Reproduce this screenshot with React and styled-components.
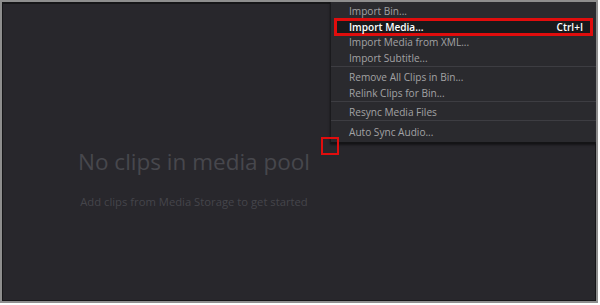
import React from 'react'
import styled, { createGlobalStyle } from 'styled-components'

const GlobalStyle = createGlobalStyle`
  html, body {
    margin: 0;
    padding: 0;
    background: #ffffff;
  }
  body {
    font-family: "Open Sans", "Noto Sans", sans-serif;
  }
`

const Screen = styled.div`
  position: relative;
  box-sizing: border-box;
  width: 598px;
  height: 303px;
  border: 2px solid #8e8e8e;
  background: #28272c;
  box-shadow: inset 0 0 0 1px #161618, inset 0 1px 0 1px #161618;
  overflow: hidden;
`

const EmptyState = styled.div`
  width: 384px;
  display: flex;
  flex-direction: column;
  align-items: center;
  padding-top: 146px;
`

const Title = styled.div`
  font-size: 22.5px;
  line-height: 27px;
  color: #47474d;
  white-space: nowrap;
`

const Hint = styled.div`
  margin-top: 20px;
  font-size: 11.25px;
  line-height: 14px;
  color: #45454b;
  white-space: nowrap;
`

const Menu = styled.div`
  position: absolute;
  top: 0;
  right: 0;
  box-sizing: border-box;
  width: 266px;
  padding: 1.5px 0 2px;
  background: #2a2a2e;
  border-left: 1px solid #1a1a1d;
  border-bottom: 2px solid #141416;
  box-shadow: 0 1px 2px rgba(0, 0, 0, 0.5);
`

const Item = styled.div`
  display: flex;
  align-items: center;
  justify-content: space-between;
  box-sizing: border-box;
  height: 15.5px;
  padding: 0 8px 0 18px;
  font-size: 10.1px;
  color: #a2a2a4;
  white-space: nowrap;
`

const ActiveItem = styled(Item)`
  height: 18px;
  margin: -1.25px 3px -1.25px 3px;
  padding: 0 7px 0 12px;
  border: 3px solid #e00d0d;
  background: #19191b;
  color: #ffffff;
  font-weight: 600;
`

const Shortcut = styled.span`
  font-weight: 600;
`

const Separator = styled.div`
  height: 1px;
  margin: 0 0 3px;
  background: #3d3d42;
`

const ClickMark = styled.div`
  position: absolute;
  left: 319px;
  top: 135px;
  box-sizing: border-box;
  width: 18px;
  height: 18px;
  border: 2.5px solid #e00d0d;
`

export default function App() {
  return (
    <>
      <GlobalStyle />
      <Screen>
        <EmptyState>
          <Title>No clips in media pool</Title>
          <Hint>Add clips from Media Storage to get started</Hint>
        </EmptyState>

        <Menu>
          <Item>Import Bin...</Item>
          <ActiveItem>
            Import Media...
            <Shortcut>Ctrl+I</Shortcut>
          </ActiveItem>
          <Item>Import Media from XML...</Item>
          <Item>Import Subtitle...</Item>
          <Separator />
          <Item>Remove All Clips in Bin...</Item>
          <Item>Relink Clips for Bin...</Item>
          <Separator />
          <Item>Resync Media Files</Item>
          <Separator />
          <Item>Auto Sync Audio...</Item>
        </Menu>

        <ClickMark />
      </Screen>
    </>
  )
}
